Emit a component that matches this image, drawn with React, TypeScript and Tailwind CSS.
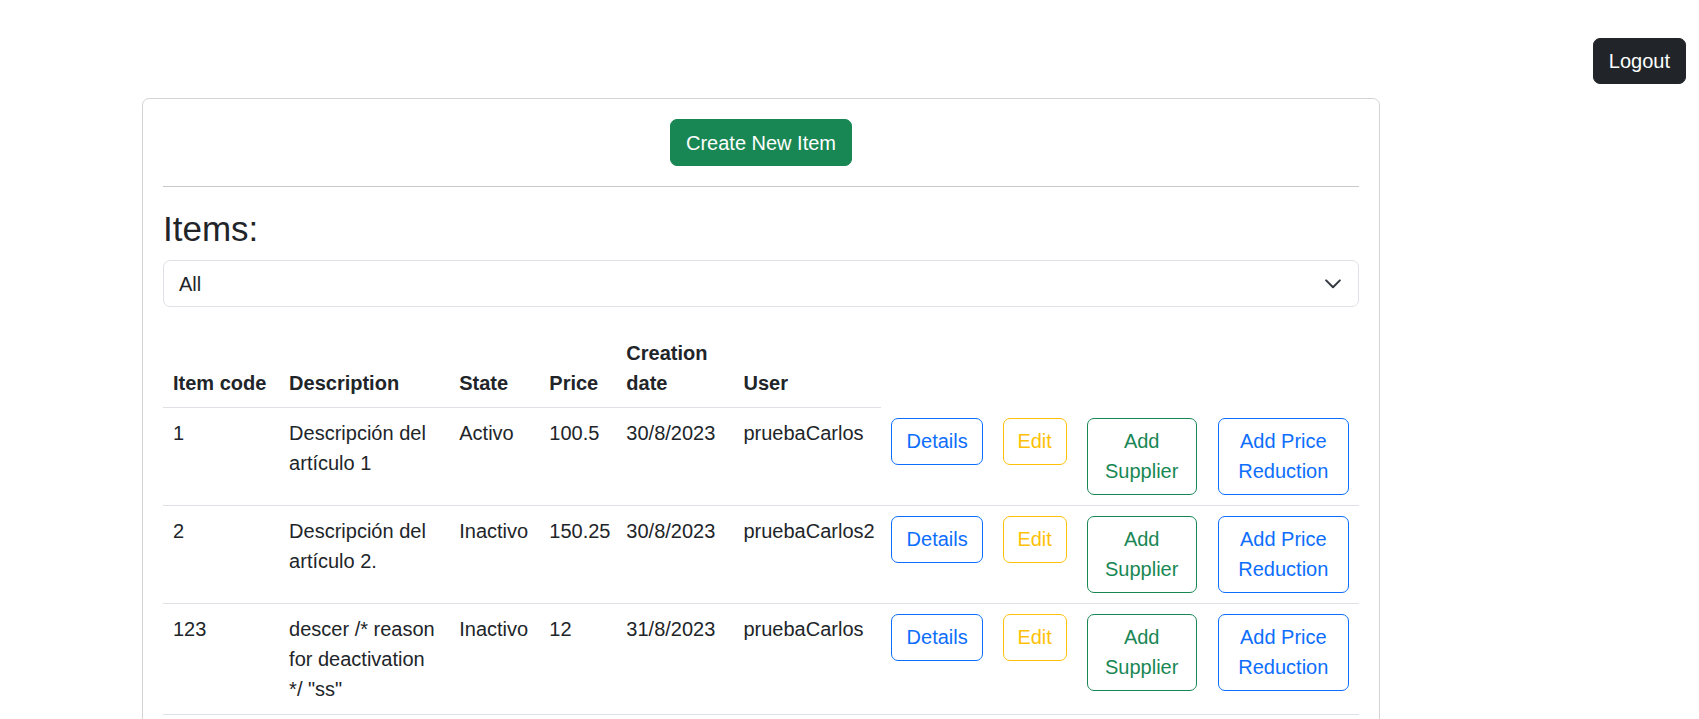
import React from 'react';

type Item = {
  code: string;
  description: string;
  state: string;
  price: string;
  date: string;
  user: string;
};

const items: Item[] = [
  { code: '1', description: 'Descripción del artículo 1', state: 'Activo', price: '100.5', date: '30/8/2023', user: 'pruebaCarlos' },
  { code: '2', description: 'Descripción del artículo 2.', state: 'Inactivo', price: '150.25', date: '30/8/2023', user: 'pruebaCarlos2' },
  { code: '123', description: 'descer /* reason for deactivation */ "ss"', state: 'Inactivo', price: '12', date: '31/8/2023', user: 'pruebaCarlos' },
];

const headers = ['Item code', 'Description', 'State', 'Price', 'Creation date', 'User'];

export default function App() {
  return (
    <div className="min-h-screen bg-white text-[20px] leading-[30px] text-[#212529] font-['Liberation_Sans',Arial,sans-serif]">
      {/* top bar */}
      <div className="flex justify-end pt-[38px] pr-[13px]">
        <button className="h-[46px] rounded-[7px] border border-[#212529] bg-[#212529] px-[15px] text-white">
          Logout
        </button>
      </div>

      {/* card */}
      <div className="ml-[142px] mt-[14px] w-[1238px] rounded-[7px] border border-[#d4d4d5] p-[20px]">
        <div className="flex justify-center">
          <button className="rounded-[7px] border border-[#198754] bg-[#198754] px-[15px] py-[7.5px] text-white">
            Create New Item
          </button>
        </div>

        <hr className="my-[20px] border-0 border-t border-[#c8c9ca]" />

        <h3 className="mb-[10px] text-[35px] leading-[43px] font-medium">Items:</h3>

        <div className="flex h-[47px] items-center justify-between rounded-[7px] border border-[#dee2e6] pl-[15px] pr-[15px] text-[#212529]">
          <span>All</span>
          <svg width="20" height="15" viewBox="0 0 16 12" fill="none">
            <path d="M2.5 3.5l5.5 5.5 5.5-5.5" stroke="#343a40" strokeWidth="1.6" strokeLinecap="round" strokeLinejoin="round" />
          </svg>
        </div>

        <table className="mt-[20px] mb-[20px] w-full table-fixed border-collapse">
          <colgroup>
            <col className="w-[116px]" />
            <col className="w-[170px]" />
            <col className="w-[90px]" />
            <col className="w-[77px]" />
            <col className="w-[117px]" />
            <col className="w-[147px]" />
            <col className="w-[112px]" />
            <col className="w-[84px]" />
            <col className="w-[131px]" />
            <col className="w-[151px]" />
          </colgroup>
          <thead className="align-bottom">
            <tr>
              {headers.map((h) => (
                <th key={h} className="border-b border-[#dee2e6] px-[10px] pt-[11px] pb-[9px] text-left font-bold">
                  {h}
                </th>
              ))}
            </tr>
          </thead>
          <tbody className="align-top">
            {items.map((it) => (
              <tr key={it.code} className="border-b border-[#dee2e6]">
                <td className="p-[10px]">{it.code}</td>
                <td className="p-[10px]">{it.description}</td>
                <td className="p-[10px]">{it.state}</td>
                <td className="p-[10px]">{it.price}</td>
                <td className="p-[10px]">{it.date}</td>
                <td className="p-[10px]">{it.user}</td>
                <td className="p-[10px]">
                  <button className="w-[92px] rounded-[7px] border border-[#0d6efd] px-[15px] py-[7.5px] text-[#0d6efd]">
                    Details
                  </button>
                </td>
                <td className="p-[10px]">
                  <button className="w-[64px] rounded-[7px] border border-[#ffc107] px-[12px] py-[7.5px] text-[#ffc107]">
                    Edit
                  </button>
                </td>
                <td className="p-[10px]">
                  <button className="w-[110px] rounded-[7px] border border-[#198754] px-[15px] py-[7.5px] text-[#198754]">
                    Add Supplier
                  </button>
                </td>
                <td className="p-[10px]">
                  <button className="w-[131px] rounded-[7px] border border-[#0d6efd] px-[15px] py-[7.5px] text-[#0d6efd]">
                    Add Price Reduction
                  </button>
                </td>
              </tr>
            ))}
          </tbody>
        </table>
      </div>
    </div>
  );
}
